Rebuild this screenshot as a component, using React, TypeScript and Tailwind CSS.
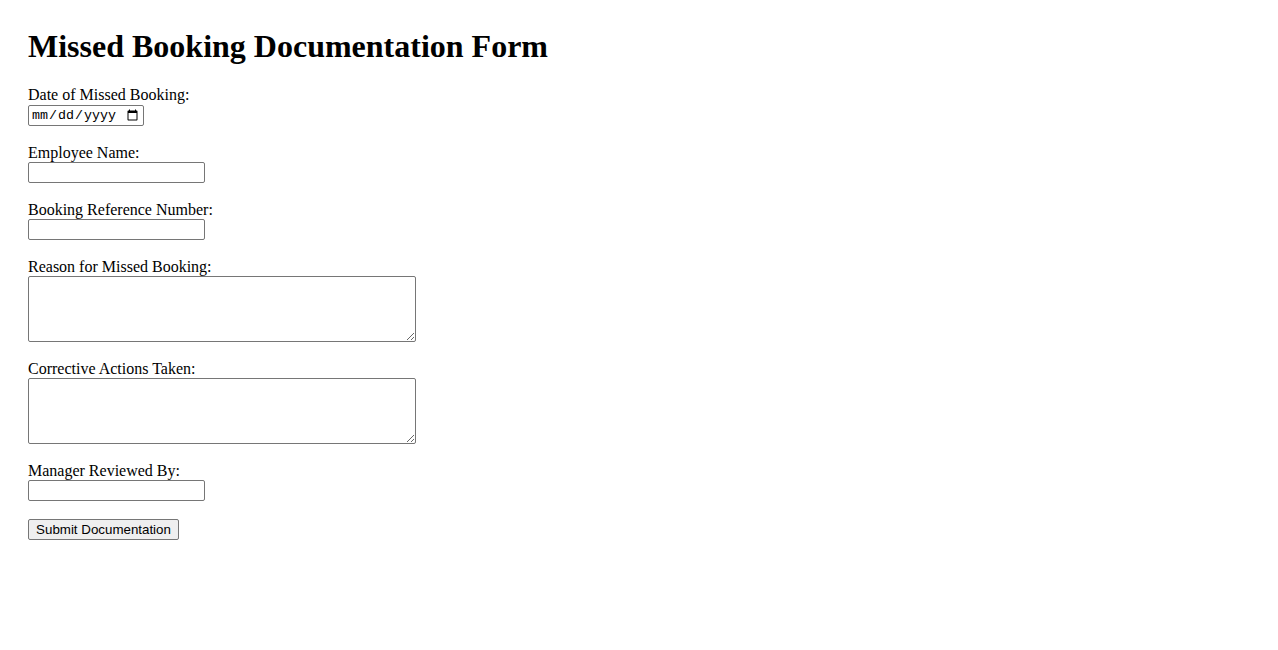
import React from "react";

const labelCls = "block h-[18px] leading-[18px] text-[16px] text-black";
const inputCls =
  "block w-[177px] h-[21px] border border-[#767676] rounded-[2px] bg-white px-[2px] text-[13.33px] [font-family:'Liberation_Sans',Arial,sans-serif] outline-none";
const textareaCls =
  "block w-[388px] h-[66px] border border-[#767676] rounded-[2px] bg-white px-[2px] py-[2px] text-[13.33px] [font-family:'Liberation_Mono',monospace] outline-none resize";

export default function App() {
  return (
    <div className="min-h-[650px] bg-white pt-[28px] pl-[28px] text-black [font-family:'Liberation_Serif','Times_New_Roman',serif]">
      <h1 className="m-0 mb-[21px] h-[37px] text-[32px] leading-[37px] font-bold">
        Missed Booking Documentation Form
      </h1>
      <form className="flex flex-col items-start" onSubmit={(e) => e.preventDefault()}>
        <label className="block h-[19px] leading-[18px] text-[16px] text-black">Date of Missed Booking:</label>
        <input
          type="date"
          className="block w-[116px] h-[21px] border border-[#767676] rounded-[2px] bg-white pl-[2px] pr-[2px] text-[13.33px] [font-family:'Liberation_Mono',monospace] outline-none"
        />
        <div className="h-[18px]" />
        <label className={labelCls}>Employee Name:</label>
        <input type="text" className={inputCls} />
        <div className="h-[18px]" />
        <label className={labelCls}>Booking Reference Number:</label>
        <input type="text" className={inputCls} />
        <div className="h-[18px]" />
        <label className={labelCls}>Reason for Missed Booking:</label>
        <textarea className={textareaCls} />
        <div className="h-[18px]" />
        <label className={labelCls}>Corrective Actions Taken:</label>
        <textarea className={textareaCls} />
        <div className="h-[18px]" />
        <label className={labelCls}>Manager Reviewed By:</label>
        <input type="text" className={inputCls} />
        <div className="h-[18px]" />
        <button
          type="submit"
          className="block h-[21px] w-[151px] border border-[#767676] rounded-[2px] bg-[#efefef] px-[6px] text-[13.33px] leading-[19px] text-black [font-family:'Liberation_Sans',Arial,sans-serif]"
        >
          Submit Documentation
        </button>
      </form>
    </div>
  );
}
